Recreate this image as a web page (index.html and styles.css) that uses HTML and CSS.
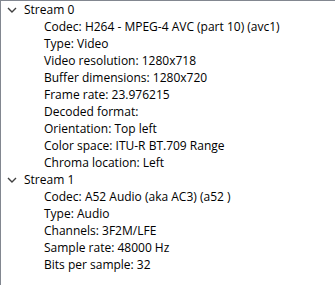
FILE: index.html
```html
<!DOCTYPE html>
<html lang="en">
  <head>
    <meta charset="UTF-8" />
    <title>Codec Information</title>
    <link rel="stylesheet" href="styles.css">
  </head>
  <body>
    <div class="tree">
      <div class="node">
        <div class="row parent">
          <svg class="chevron" width="10" height="6" viewBox="0 0 10 6">
            <path d="M1 1 L5 5 L9 1" />
          </svg>
          <span>Stream 0</span>
        </div>
        <div class="row child">Codec: H264 - MPEG-4 AVC (part 10) (avc1)</div>
        <div class="row child">Type: Video</div>
        <div class="row child">Video resolution: 1280x718</div>
        <div class="row child">Buffer dimensions: 1280x720</div>
        <div class="row child">Frame rate: 23.976215</div>
        <div class="row child">Decoded format:</div>
        <div class="row child">Orientation: Top left</div>
        <div class="row child">Color space: ITU-R BT.709 Range</div>
        <div class="row child">Chroma location: Left</div>
      </div>
      <div class="node">
        <div class="row parent">
          <svg class="chevron" width="10" height="6" viewBox="0 0 10 6">
            <path d="M1 1 L5 5 L9 1" />
          </svg>
          <span>Stream 1</span>
        </div>
        <div class="row child">Codec: A52 Audio (aka AC3) (a52 )</div>
        <div class="row child">Type: Audio</div>
        <div class="row child">Channels: 3F2M/LFE</div>
        <div class="row child">Sample rate: 48000 Hz</div>
        <div class="row child">Bits per sample: 32</div>
      </div>
    </div>
  </body>
</html>
```

FILE: styles.css
```css
* {
  margin: 0;
  padding: 0;
  box-sizing: border-box;
}
html,
body {
  height: 100%;
}
body {
  font-family: "Open Sans", "Noto Sans", sans-serif;
  font-size: 12px;
  color: #000;
  background: #fff;
}
.tree {
  height: 100%;
  border-top: 1px solid #828790;
  border-left: 1px solid #828790;
}
.row {
  height: 17px;
  line-height: 17px;
  white-space: nowrap;
}
.parent {
  display: flex;
  align-items: center;
  padding-left: 6px;
}
.parent span {
  margin-left: 7px;
}
.chevron {
  fill: none;
  stroke: #404040;
  stroke-width: 1.4;
}
.child {
  padding-left: 43px;
}
```
